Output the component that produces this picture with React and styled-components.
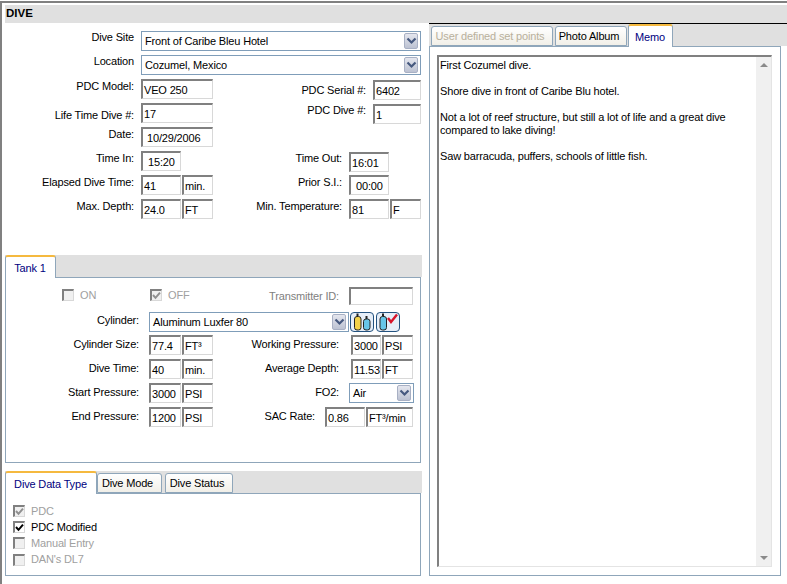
import styled, { createGlobalStyle } from "styled-components";

const GlobalStyle = createGlobalStyle`
  html, body {
    margin: 0;
    padding: 0;
    background: #fff;
  }
  * {
    box-sizing: border-box;
  }
`;

const Chevron = () => (
  <svg width="11" height="8" viewBox="0 0 11 8">
    <path d="M1.5 1.5 L5.5 5.5 L9.5 1.5" fill="none" stroke="#46597f" strokeWidth="2.2" />
  </svg>
);

const Check = ({ color }) => (
  <svg width="9" height="9" viewBox="0 0 9 9">
    <path d="M1 4 L3.5 6.8 L8 1.6" fill="none" stroke={color} strokeWidth="2" />
  </svg>
);

const Tank = ({ x, fill, tall }) => (
  <g>
    <rect x={x + 2} y={tall ? 0.5 : 3} width="2" height="3" fill="#222" />
    <rect x={x} y={tall ? 3.5 : 6} width="6.5" height={tall ? 13.5 : 11} rx="2.5" fill={fill} stroke="#222" strokeWidth="1" />
  </g>
);

const TanksIcon = () => (
  <svg width="20" height="18" viewBox="0 0 20 18">
    <Tank x={2.5} fill="#f3d24a" tall />
    <Tank x={11.5} fill="#67c6e8" />
  </svg>
);

const TankCheckIcon = () => (
  <svg width="20" height="18" viewBox="0 0 20 18">
    <Tank x={2} fill="#67c6e8" tall />
    <path d="M10 5 L13 9 L19 1.5" fill="none" stroke="#d8142a" strokeWidth="2.4" />
  </svg>
);

const Combo = ({ value, width }) => (
  <ComboBox $w={width}>
    <span>{value}</span>
    <ComboArrow>
      <Chevron />
    </ComboArrow>
  </ComboBox>
);

const CheckItem = ({ label, checked, disabled }) => (
  <CheckRow $disabled={disabled}>
    <CheckBox $disabled={disabled}>
      {checked && <Check color={disabled ? "#909090" : "#000"} />}
    </CheckBox>
    {label}
  </CheckRow>
);

const App = () => {
  return (
    <Page>
      <GlobalStyle />
      <Frame>
        <TitleBar>DIVE</TitleBar>
        <Columns>
          <LeftColumn>
            <DiveForm>
              <ComboRow>
                <Label $w={129} $top={0}>Dive Site</Label>
                <Combo value="Front of Caribe Bleu Hotel" width={280} />
              </ComboRow>
              <ComboRow>
                <Label $w={129} $top={0}>Location</Label>
                <Combo value="Cozumel, Mexico" width={280} />
              </ComboRow>
              <FormRow>
                <Cell>
                  <Label $w={129}>PDC Model:</Label>
                  <Field $w={72}>VEO 250</Field>
                </Cell>
                <Cell>
                  <Label $w={153} $top={5}>PDC Serial #:</Label>
                  <Field $w={48} $drop={1}>6402</Field>
                </Cell>
              </FormRow>
              <FormRow>
                <Cell>
                  <Label $w={129} $top={6}>Life Time Dive #:</Label>
                  <Field $w={72}>17</Field>
                </Cell>
                <Cell>
                  <Label $w={153}>PDC Dive #:</Label>
                  <Field $w={48} $drop={1}>1</Field>
                </Cell>
              </FormRow>
              <FormRow>
                <Cell>
                  <Label $w={129}>Date:</Label>
                  <Field $w={72} $pad={4}>10/29/2006</Field>
                </Cell>
              </FormRow>
              <FormRow>
                <Cell>
                  <Label $w={129}>Time In:</Label>
                  <Field $w={40} $pad={5}>15:20</Field>
                </Cell>
                <Cell>
                  <Label $w={129}>Time Out:</Label>
                  <Field $w={40} $drop={1}>16:01</Field>
                </Cell>
              </FormRow>
              <FormRow>
                <Cell>
                  <Label $w={129}>Elapsed Dive Time:</Label>
                  <Field $w={40}>41</Field>
                  <Field $w={31} $gap={1}>min.</Field>
                </Cell>
                <Cell>
                  <Label $w={129}>Prior S.I.:</Label>
                  <Field $w={40} $pad={5}>00:00</Field>
                </Cell>
              </FormRow>
              <FormRow>
                <Cell>
                  <Label $w={129}>Max. Depth:</Label>
                  <Field $w={40}>24.0</Field>
                  <Field $w={31} $gap={1}>FT</Field>
                </Cell>
                <Cell>
                  <Label $w={129}>Min. Temperature:</Label>
                  <Field $w={40}>81</Field>
                  <Field $w={31} $gap={1}>F</Field>
                </Cell>
              </FormRow>
            </DiveForm>

            <TabStrip>
              <Tab $active $w={51}>Tank 1</Tab>
            </TabStrip>
            <TankPanel>
              <TankRow $h={24}>
                <Cell>
                  <CheckSlot $w={68}>
                    <CheckBox $disabled />
                  </CheckSlot>
                  <MutedText $w={76}>ON</MutedText>
                  <CheckSlot $w={12}>
                    <CheckBox $disabled>
                      <Check color="#909090" />
                    </CheckBox>
                  </CheckSlot>
                  <MutedText $w={40}>OFF</MutedText>
                </Cell>
                <Cell>
                  <TankLabel $w={126} $muted>Transmitter ID:</TankLabel>
                  <Field $w={64} $h={18} $gap={10} />
                </Cell>
              </TankRow>
              <CylinderRow>
                <TankLabel $w={133} $top={2}>Cylinder:</TankLabel>
                <Combo value="Aluminum Luxfer 80" width={200} />
                <IconButton $gap={1}><TanksIcon /></IconButton>
                <IconButton $gap={2}><TankCheckIcon /></IconButton>
              </CylinderRow>
              <TankRow>
                <Cell>
                  <TankLabel $w={133}>Cylinder Size:</TankLabel>
                  <Field $w={32} $gap={10}>77.4</Field>
                  <Field $w={31} $gap={1}>FT³</Field>
                </Cell>
                <Cell>
                  <TankLabel $w={126}>Working Pressure:</TankLabel>
                  <Field $w={30} $gap={12}>3000</Field>
                  <Field $w={31} $gap={1}>PSI</Field>
                </Cell>
              </TankRow>
              <TankRow>
                <Cell>
                  <TankLabel $w={133}>Dive Time:</TankLabel>
                  <Field $w={32} $gap={10}>40</Field>
                  <Field $w={31} $gap={1}>min.</Field>
                </Cell>
                <Cell>
                  <TankLabel $w={126}>Average Depth:</TankLabel>
                  <Field $w={30} $gap={12}>11.53</Field>
                  <Field $w={31} $gap={1}>FT</Field>
                </Cell>
              </TankRow>
              <TankRow>
                <Cell>
                  <TankLabel $w={133}>Start Pressure:</TankLabel>
                  <Field $w={32} $gap={10}>3000</Field>
                  <Field $w={31} $gap={1}>PSI</Field>
                </Cell>
                <Cell>
                  <TankLabel $w={126}>FO2:</TankLabel>
                  <ComboSlot>
                    <Combo value="Air" width={65} />
                  </ComboSlot>
                </Cell>
              </TankRow>
              <TankRow>
                <Cell>
                  <TankLabel $w={133}>End Pressure:</TankLabel>
                  <Field $w={32} $gap={10}>1200</Field>
                  <Field $w={31} $gap={1}>PSI</Field>
                </Cell>
                <Cell>
                  <TankLabel $w={102}>SAC Rate:</TankLabel>
                  <Field $w={40} $gap={10}>0.86</Field>
                  <Field $w={47} $gap={1}>FT³/min</Field>
                </Cell>
              </TankRow>
            </TankPanel>

            <TabStrip $top={8}>
              <Tab $active $w={92}>Dive Data Type</Tab>
              <Tab $w={65}>Dive Mode</Tab>
              <Tab $w={68} $gap={3}>Dive Status</Tab>
            </TabStrip>
            <DataPanel>
              <CheckItem label="PDC" checked disabled />
              <CheckItem label="PDC Modified" checked />
              <CheckItem label="Manual Entry" disabled />
              <CheckItem label="DAN's DL7" disabled />
            </DataPanel>
          </LeftColumn>

          <RightColumn>
            <TabStrip $right>
              <Tab $w={122} $gap={0} $disabled>User defined set points</Tab>
              <Tab $w={72} $gap={2}>Photo Album</Tab>
              <Tab $active $w={45} $gap={1}>Memo</Tab>
            </TabStrip>
            <MemoPanel>
              <MemoBox>
                <MemoText>
                  <p>First Cozumel dive.</p>
                  <p>Shore dive in front of Caribe Blu hotel.</p>
                  <p>
                    Not a lot of reef structure, but still a lot of life and a great dive
                    <br />
                    compared to lake diving!
                  </p>
                  <p>Saw barracuda, puffers, schools of little fish.</p>
                </MemoText>
                <ScrollTrack>
                  <ScrollArrow />
                  <ScrollArrow $down />
                </ScrollTrack>
              </MemoBox>
            </MemoPanel>
          </RightColumn>
        </Columns>
      </Frame>
    </Page>
  );
};
export default App;

const Page = styled.div`
  width: 787px;
  height: 584px;
  overflow: hidden;
  padding-top: 1px;
  background: #fff;
  font-family: "Liberation Sans", Arial, sans-serif;
  font-size: 11px;
  letter-spacing: -0.16px;
  line-height: 13px;
  color: #000;
`;

const Frame = styled.div`
  height: 583px;
  border-top: 2px solid #808080;
  border-left: 2px solid #808080;
  padding: 2px 0 0 3px;
`;

const TitleBar = styled.div`
  height: 18px;
  padding: 2px 0 0 1px;
  background: #e0e0e0;
  font-weight: 700;
  font-size: 11.5px;
  letter-spacing: 0;
`;

const Columns = styled.div`
  display: flex;
`;

const LeftColumn = styled.div`
  width: 417px;
`;

const DiveForm = styled.div`
  height: 232px;
  padding-top: 8px;
`;

const ComboRow = styled.div`
  display: flex;
  height: 24px;
`;

const FormRow = styled.div`
  display: grid;
  grid-template-columns: 208px 208px;
  height: 24px;
`;

const Cell = styled.div`
  display: flex;
  align-items: flex-start;
`;

const Label = styled.div`
  width: ${(p) => p.$w}px;
  margin-right: 7px;
  margin-top: ${(p) => p.$top ?? 1}px;
  text-align: right;
  white-space: nowrap;
`;

const Field = styled.div`
  width: ${(p) => p.$w}px;
  height: ${(p) => p.$h ?? 20}px;
  margin-left: ${(p) => p.$gap ?? 0}px;
  margin-top: ${(p) => p.$drop ?? 0}px;
  padding: 3px 0 0 ${(p) => p.$pad ?? 1}px;
  background: #fff;
  border-style: solid;
  border-width: 2px 1px 1px 2px;
  border-color: #808080 #d8d8d8 #d8d8d8 #808080;
  white-space: nowrap;
  overflow: hidden;
`;

const ComboBox = styled.div`
  display: flex;
  align-items: center;
  justify-content: space-between;
  width: ${(p) => p.$w}px;
  height: 20px;
  padding: 0 2px 0 3px;
  background: #fff;
  border: 1px solid #7f9db9;
`;

const ComboArrow = styled.div`
  display: flex;
  align-items: center;
  justify-content: center;
  width: 14px;
  height: 16px;
  background: linear-gradient(#e4e6ee, #bcc2d2);
  border: 1px solid #a8b0c4;
  border-radius: 2px;
`;

const TabStrip = styled.div`
  display: flex;
  align-items: flex-end;
  height: ${(p) => (p.$right ? 23 : 22)}px;
  margin-top: ${(p) => p.$top ?? 0}px;
  padding-left: ${(p) => (p.$right ? 2 : 0)}px;
  background: #e0e0e0;
  border-top: ${(p) => (p.$right ? "1px solid #000" : "none")};
`;

const Tab = styled.div`
  position: relative;
  z-index: 1;
  flex: none;
  display: flex;
  align-items: center;
  justify-content: center;
  width: ${(p) => p.$w}px;
  height: ${(p) => (p.$active ? 23 : 20)}px;
  margin-left: ${(p) => p.$gap ?? 0}px;
  margin-bottom: ${(p) => (p.$active ? -1 : 0)}px;
  padding: 1px ${(p) => (p.$active ? 1 : 4)}px 0 0;
  color: ${(p) => (p.$active ? "#000080" : p.$disabled ? "#b8b09c" : "#000")};
  background: ${(p) => (p.$active ? "#fff" : "linear-gradient(#ffffff, #f1efe8)")};
  border: 1px solid #8fa6ba;
  border-top: ${(p) => (p.$active ? "2px solid #f5b93f" : "1px solid #8fa6ba")};
  border-bottom: ${(p) => (p.$active ? "none" : "1px solid #8fa6ba")};
  border-radius: 3px 3px 0 0;
  white-space: nowrap;
`;

const TankPanel = styled.div`
  width: 416px;
  height: 186px;
  padding-top: 9px;
  background: #fff;
  border: 1px solid #8fa6ba;
`;

const TankRow = styled.div`
  display: grid;
  grid-template-columns: 207px 207px;
  height: ${(p) => p.$h ?? 24}px;
`;

const TankLabel = styled.div`
  width: ${(p) => p.$w}px;
  margin-top: ${(p) => p.$top ?? 3}px;
  text-align: right;
  white-space: nowrap;
  color: ${(p) => (p.$muted ? "#808080" : "#000")};
`;

const CylinderRow = styled.div`
  display: flex;
  align-items: flex-start;
  height: 24px;
  padding-top: 1px;

  ${ComboBox} {
    margin-left: 10px;
  }
`;

const IconButton = styled.div`
  display: flex;
  align-items: center;
  justify-content: center;
  width: 24px;
  height: 20px;
  margin-left: ${(p) => p.$gap}px;
  background: #e6eef8;
  border: 1px solid #24527f;
  border-radius: 4px;
`;

const ComboSlot = styled.div`
  margin-left: 10px;
`;

const CheckSlot = styled.div`
  width: ${(p) => p.$w}px;
  padding-top: 2px;
  flex: none;
  display: flex;
  justify-content: flex-end;
`;

const MutedText = styled.div`
  width: ${(p) => p.$w}px;
  flex: none;
  margin-top: 2px;
  padding-left: 6px;
  color: #a0a0a0;
`;

const CheckBox = styled.div`
  flex: none;
  display: flex;
  align-items: center;
  justify-content: center;
  width: 12px;
  height: 12px;
  background: ${(p) => (p.$disabled ? "#f0f0f0" : "#fff")};
  border-style: solid;
  border-width: 2px 1px 1px 2px;
  border-color: #808080 #d8d8d8 #d8d8d8 #808080;
`;

const DataPanel = styled.div`
  width: 416px;
  height: 83px;
  padding: 9px 0 0 7px;
  background: #fff;
  border: 1px solid #8fa6ba;
`;

const CheckRow = styled.div`
  display: flex;
  align-items: center;
  gap: 6px;
  height: 16.2px;
  color: ${(p) => (p.$disabled ? "#a0a0a0" : "#000")};
`;

const RightColumn = styled.div`
  flex: 1;
  margin-left: 7px;
`;

const MemoPanel = styled.div`
  width: 352px;
  height: 530px;
  padding: 8px 8px 8px 7px;
  background: #fff;
  border: 1px solid #8fa6ba;
`;

const MemoBox = styled.div`
  display: flex;
  height: 512px;
  border-style: solid;
  border-width: 2px 1px 1px 2px;
  border-color: #808080 #e4e4e4 #e4e4e4 #808080;
`;

const MemoText = styled.div`
  flex: 1;
  padding: 2px 0 0 1px;

  p {
    margin: 0 0 13px;
  }
`;

const ScrollTrack = styled.div`
  display: flex;
  flex-direction: column;
  align-items: center;
  justify-content: space-between;
  width: 15px;
  padding: 6px 0;
  background: #f0f0f0;
`;

const ScrollArrow = styled.div`
  width: 0;
  height: 0;
  border-left: 4px solid transparent;
  border-right: 4px solid transparent;
  ${(p) => (p.$down ? "border-top: 4px solid #8a8a8a;" : "border-bottom: 4px solid #8a8a8a;")}
`;
